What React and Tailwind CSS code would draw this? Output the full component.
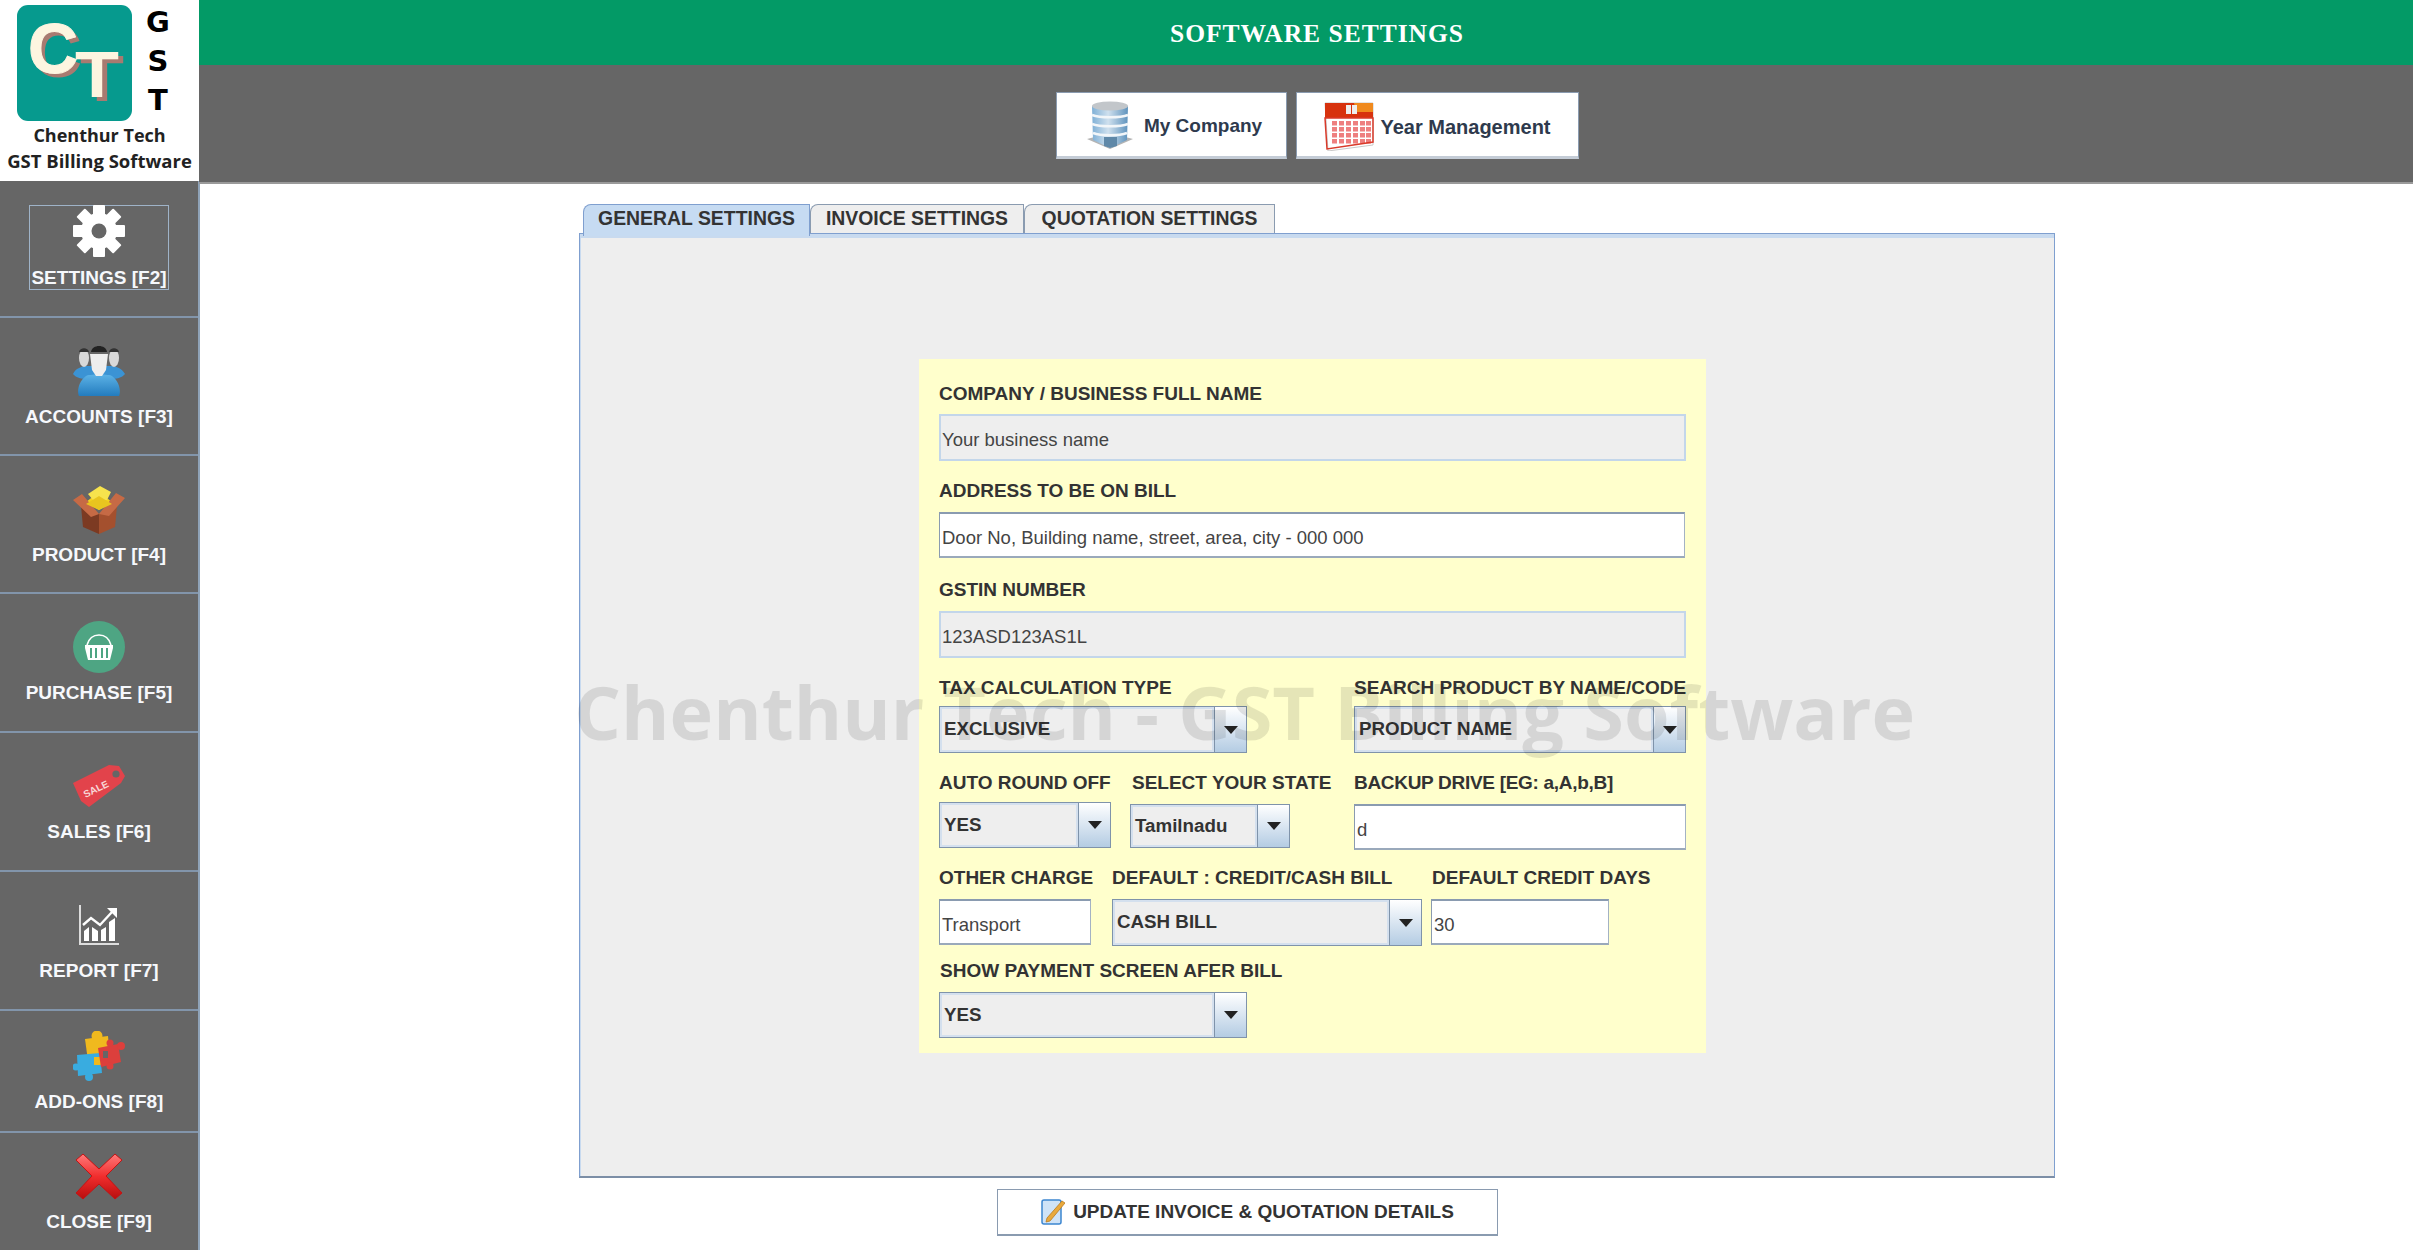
const sans = "font-['Liberation_Sans',Arial,sans-serif]";

/* sidebar icons */
function GearIcon() {
  const teeth = [0, 45, 90, 135, 180, 225, 270, 315];
  return (
    <svg width="52" height="52" viewBox="0 0 52 52">
      {teeth.map((a) => (
        <rect key={a} x="20" y="0" width="12" height="14" rx="1" fill="#fff" transform={`rotate(${a} 26 26)`} />
      ))}
      <circle cx="26" cy="26" r="18" fill="#fff" />
      <circle cx="26" cy="26" r="7.5" fill="#666" />
    </svg>
  );
}

function PeopleIcon() {
  return (
    <svg width="52" height="50" viewBox="0 0 52 50">
      <defs>
        <linearGradient id="shirt" x1="0" y1="0" x2="0" y2="1">
          <stop offset="0" stopColor="#5cb2e6" />
          <stop offset="1" stopColor="#1f78bb" />
        </linearGradient>
      </defs>
      <path d="M0 28c3-6 8-7 12-8h28c5 1 9 3 12 8-3 4-9 5-14 5H14c-5 0-11-1-14-5z" fill="#3b93d4" />
      <ellipse cx="11" cy="12" rx="5" ry="9" fill="#d9d9d9" />
      <ellipse cx="41" cy="12" rx="5" ry="9" fill="#d9d9d9" />
      <path d="M6 6c1-5 9-5 10 0zM36 6c1-5 9-5 10 0z" fill="#333" />
      <path d="M6 50c-2-4-1-14 7-20 2-2 24-2 26 0 8 6 9 16 7 20-5 2-34 2-40 0z" fill="url(#shirt)" />
      <path d="M17 8h18l-2 16-4 6h-6l-4-6z" fill="#eee" />
      <path d="M18 6c1-8 15-8 16 0z" fill="#222" />
    </svg>
  );
}

function BoxIcon() {
  return (
    <svg width="52" height="50" viewBox="0 0 52 50">
      <path d="M13 18 26 8l13 10-13 8z" fill="#f3d21f" />
      <path d="M15 10l12-8 11 6-4 8H20z" fill="#f7e34d" />
      <path d="M8 22l18 8v20L10 43z" fill="#7c3a22" />
      <path d="M44 22l-18 8v20l16-7z" fill="#a4502e" />
      <path d="M0 16l9-6 17 20-8 3zM52 14l-9-5-17 21 10 2z" fill="#c66a45" />
      <path d="M13 20l13 6 13-6-13-8z" fill="#e9c51f" />
    </svg>
  );
}

function BasketIcon() {
  return (
    <svg width="52" height="52" viewBox="0 0 52 52">
      <circle cx="26" cy="26" r="26" fill="#4ea583" />
      <path d="M14 24c2-7 7-10 12-10s10 3 12 10" fill="none" stroke="#fff" strokeWidth="1.6" />
      <path d="M12 24h28v3l-3 12H15l-3-12z" fill="#fff" />
      <path d="M18 27v10M23 27v10M29 27v10M34 27v10" stroke="#4ea583" strokeWidth="2" />
    </svg>
  );
}

function TagIcon() {
  return (
    <svg width="52" height="44" viewBox="0 0 52 44">
      <path d="M0 19 36 1l10 1 6 10-4 7-32 24-8-6z" fill="#e2434b" />
      <circle cx="43" cy="10" r="3.6" fill="#666" />
      <text x="10" y="29" fontSize="10" fontWeight="700" fill="#f8d5d5" transform="rotate(-26 22 26)" fontFamily="Liberation Sans">SALE</text>
    </svg>
  );
}

function ChartIcon() {
  return (
    <svg width="42" height="42" viewBox="0 0 42 42">
      <path d="M2 1v39h39" fill="none" stroke="#ddd" strokeWidth="2" />
      <path d="M6 37V27l5-4v14zM14 37V23l6 4v10zM23 37V26l5-3v14zM31 37V18l6-4v23z" fill="#fff" />
      <path d="M5 21 13 14l9 7 12-13" fill="none" stroke="#fff" strokeWidth="2.4" />
      <path d="M29 4h10v10z" fill="#fff" />
    </svg>
  );
}

function PuzzleIcon() {
  return (
    <svg width="52" height="50" viewBox="0 0 52 50">
      <g fill="#f0b91e">
        <path d="M12 8 35 5l2 22-22 3z" />
        <circle cx="24" cy="5" r="5.5" />
      </g>
      <g fill="#39ace0">
        <path d="M4 24 27 22l2 20-24 3z" />
        <circle cx="16" cy="46" r="4" />
        <circle cx="3" cy="36" r="3.5" />
      </g>
      <rect x="21" y="26" width="9" height="8" fill="#f0b91e" />
      <g fill="#dc3f3c">
        <path d="M25 17 45 13l3 18-20 5z" />
        <circle cx="37" cy="12" r="3.5" />
        <circle cx="48" cy="15" r="4" />
        <circle cx="37" cy="35" r="3.5" />
      </g>
      <rect x="30" y="20" width="5" height="7" fill="#666" />
    </svg>
  );
}

function CloseIcon() {
  return (
    <svg width="50" height="50" viewBox="0 0 50 50">
      <defs>
        <linearGradient id="xred" x1="0" y1="0" x2="0" y2="1">
          <stop offset="0" stopColor="#ff7a7a" />
          <stop offset="0.5" stopColor="#f12d2d" />
          <stop offset="1" stopColor="#b80e0e" />
        </linearGradient>
      </defs>
      <path d="M9 3 25 18 41 3l7 6-16 16 16 17-7 6-16-15L9 48l-7-6 16-17L2 9z" fill="url(#xred)" stroke="#c31313" strokeWidth="1" strokeLinejoin="round" />
    </svg>
  );
}

/* header & misc icons */
function BuildingIcon() {
  return (
    <svg width="46" height="48" viewBox="0 0 46 48">
      <defs>
        <linearGradient id="glass" x1="0" y1="0" x2="1" y2="0">
          <stop offset="0" stopColor="#7fb0d6" />
          <stop offset="0.45" stopColor="#cfe0ee" />
          <stop offset="1" stopColor="#5f93bd" />
        </linearGradient>
      </defs>
      <path d="M0 38l23 10 23-10-23-6z" fill="#b4b4b4" />
      <path d="M5 5h36l-1 34-17 8-17-8z" fill="url(#glass)" />
      <ellipse cx="23" cy="5" rx="18" ry="4.5" fill="#c2c6ca" />
      <path d="M5 14c8 3 28 3 36 0M5 23c8 3 28 3 36 0M6 32c8 3 26 3 34 0" fill="none" stroke="#f2f6f9" strokeWidth="2.5" />
      <path d="M17 36h13v9l-7 2-6-2z" fill="#5f88a8" />
    </svg>
  );
}

function CalendarIcon() {
  return (
    <svg width="50" height="52" viewBox="0 0 50 52">
      <path d="M1 4h48v42L4 52z" fill="#fff" stroke="#c9c9c9" />
      <path d="M1 4h48v15H1z" fill="#d7320e" />
      <path d="M30 4h19v9H32z" fill="#f08a1e" />
      <rect x="22" y="6" width="5" height="9" fill="#eee" />
      <rect x="28" y="6" width="5" height="9" fill="#eee" />
      <g fill="#ee7f7f">
        {[22, 28, 34, 40].map((y) =>
          [8, 15, 22, 29, 36, 42].map((x) => <rect key={`${x}-${y}`} x={x} y={y} width="5" height="4.5" />)
        )}
      </g>
      <path d="M1 19h48v24L3 50z" fill="none" stroke="#d93a2a" strokeWidth="1.5" />
    </svg>
  );
}

function EditIcon() {
  return (
    <svg width="24" height="26" viewBox="0 0 24 26">
      <rect x="1" y="1" width="19" height="24" rx="2" fill="#cfe3f7" stroke="#3d86d0" strokeWidth="1.5" />
      <path d="M21 2l3 2L9 22l-4 1 1-4z" fill="#e9a93c" stroke="#b97b1e" strokeWidth="0.8" />
    </svg>
  );
}

function SideItem({ icon, label, h, focused }) {
  return (
    <div className={`${h} flex flex-col items-center justify-center border-b-2 border-[#8295ab] last:border-b-0`}>
      <div className={`flex flex-col items-center ${focused ? "w-[140px] h-[85px] border border-[#9fb3c8] -mt-[3px]" : "gap-[11px]"}`}>
        <div className="h-[50px] flex items-center justify-center">{icon}</div>
        <span className={`h-5 text-[19px] leading-5 font-bold text-[#f6f8fc] whitespace-nowrap ${sans} ${focused ? "mt-[12px]" : ""}`}>{label}</span>
      </div>
    </div>
  );
}

function Label({ children, className = "" }) {
  return <div className={`h-5 text-[19px] leading-5 font-bold text-[#333] whitespace-nowrap ${className}`}>{children}</div>;
}

function TextBox({ value, className = "" }) {
  return (
    <div className={`bg-white border-t-2 border-l border-r border-t-[#8a9bb0] border-l-[#8a9bb0] border-r-[#a3b2c4] border-b-2 border-b-[#9aa9bb] px-[2px] pt-[6px] flex items-center text-[18.5px] text-[#444] ${className}`}>
      {value}
    </div>
  );
}

function ReadOnlyBox({ value, className = "" }) {
  return (
    <div className={`bg-[#eeeeee] border-2 border-[#c3d6ea] pl-[1px] pt-[4px] flex items-center text-[18.5px] text-[#444] ${className}`}>
      {value}
    </div>
  );
}

function Combo({ value, className = "", arrow = "w-[32px]" }) {
  return (
    <div className={`flex border border-[#7f93aa] bg-[#eeeeee] ${className}`}>
      <div className="flex-1 border-2 border-[#d4e0ee] pl-[2px] flex items-center text-[18.75px] font-bold text-[#333] whitespace-nowrap overflow-hidden">
        {value}
      </div>
      <div className={`${arrow} border-l border-[#7f93aa] bg-gradient-to-b from-white to-[#b4cce3] flex items-center justify-center`}>
        <div className="w-0 h-0 border-l-[7px] border-r-[7px] border-t-[8px] border-l-transparent border-r-transparent border-t-[#222]" />
      </div>
    </div>
  );
}

function Tab({ label, active, className = "" }) {
  return (
    <div
      className={`rounded-tl-[8px] border-t border-r border-l flex items-center justify-center text-[19.4px] font-bold text-[#333] whitespace-nowrap ${
        active ? "h-[32px] pb-[3px] bg-[#c6dbf2] border-[#7f9fcf] relative z-10" : "h-[29px] bg-[#eeeeee] border-[#8a9bb0]"
      } ${className}`}
    >
      {label}
    </div>
  );
}

function TopButton({ icon, label, className = "" }) {
  return (
    <div className={`h-[67px] bg-white border border-[#8a9bb0] border-b-[3px] border-b-[#c4ccd6] flex items-center justify-center font-bold text-[#2e3a4d] ${className}`}>
      {icon}
      <span className="pt-[4px]">{label}</span>
    </div>
  );
}

export default function App() {
  return (
    <div className={`relative flex w-full h-screen overflow-hidden bg-white ${sans}`}>
      {/* left menu */}
      <aside className="w-[199px] shrink-0 flex flex-col">
        <div className="h-[180px] bg-white mb-[1px]">
          <div className="flex h-[122px]">
            <svg className="ml-[17px] mt-[5px]" width="115" height="116" viewBox="0 0 115 116">
              <rect width="115" height="116" rx="11" fill="#069a8e" />
              <g fontFamily="Liberation Sans" fontWeight="700">
                <text x="15" y="72" fontSize="70" fill="#a87a70" textLength="50" lengthAdjust="spacingAndGlyphs">C</text>
                <text x="11" y="68" fontSize="70" fill="#fdf5e0" stroke="#fdf5e0" textLength="50" lengthAdjust="spacingAndGlyphs">C</text>
                <text x="63" y="96" fontSize="65" fill="#a87a70" textLength="44" lengthAdjust="spacingAndGlyphs">T</text>
                <text x="58" y="92" fontSize="65" fill="#fdf5e0" textLength="44" lengthAdjust="spacingAndGlyphs">T</text>
              </g>
            </svg>
            <div className="ml-[12px] mt-[7px] w-[28px] flex flex-col items-center gap-[9px] text-[29px] leading-[30px] font-bold text-black font-['DejaVu_Sans',sans-serif]">
              <span>G</span>
              <span>S</span>
              <span>T</span>
            </div>
          </div>
          <div className="flex flex-col items-center text-[#222] font-bold font-['Open_Sans',sans-serif] whitespace-nowrap">
            <span className="text-[18px] leading-[26px]">Chenthur Tech</span>
            <span className="text-[18.5px] leading-[26px]">GST Billing Software</span>
          </div>
        </div>
        <nav className="flex-1 -mr-[1px] bg-[#666666] border-r-2 border-[#8fa3b8] flex flex-col">
          <SideItem h="h-[137px]" icon={<GearIcon />} label="SETTINGS [F2]" focused />
          <SideItem h="h-[138px]" icon={<PeopleIcon />} label="ACCOUNTS [F3]" />
          <SideItem h="h-[138px]" icon={<BoxIcon />} label="PRODUCT [F4]" />
          <SideItem h="h-[139px]" icon={<BasketIcon />} label="PURCHASE [F5]" />
          <SideItem h="h-[139px]" icon={<TagIcon />} label="SALES [F6]" />
          <SideItem h="h-[139px]" icon={<ChartIcon />} label="REPORT [F7]" />
          <SideItem h="h-[122px]" icon={<PuzzleIcon />} label="ADD-ONS [F8]" />
          <SideItem h="flex-1" icon={<CloseIcon />} label="CLOSE [F9]" />
        </nav>
      </aside>

      <div className="flex-1 flex flex-col min-w-0">
        <header className="h-[65px] bg-[#039a66] flex items-center justify-center pl-[22px] pt-[4px] text-white text-[25.5px] font-bold tracking-[1px] font-['Liberation_Serif',serif]">
          SOFTWARE SETTINGS
        </header>
        <div className="h-[119px] bg-[#666666] border-b-2 border-[#9a9a9a] pt-[27px] pl-[857px] flex gap-[9px]">
          <TopButton className="w-[231px] gap-[11px] pl-[6px] text-[19px]" icon={<BuildingIcon />} label="My Company" />
          <TopButton className="w-[283px] gap-[6px] text-[20px]" icon={<CalendarIcon />} label="Year Management" />
        </div>

        <main className="flex-1 pt-[20px]">
          <div className="ml-[384px] flex items-start h-[32px] -mb-[3px]">
            <Tab active label="GENERAL SETTINGS" className="w-[227px]" />
            <Tab label="INVOICE SETTINGS" className="w-[214px]" />
            <Tab label="QUOTATION SETTINGS" className="w-[251px]" />
          </div>
          <div className="ml-[380px] w-[1476px] h-[945px] bg-[#eeeeee] border border-[#7f9fcf] border-b-2 border-b-[#7c8ea6] shadow-[inset_1px_4px_0_#c8daef] pl-[339px] pt-[125px]">
            {/* form panel */}
            <div className="w-[787px] h-[694px] bg-[#ffffcc] pl-[20px] pt-[25px]">
              <Label>COMPANY / BUSINESS FULL NAME</Label>
              <ReadOnlyBox value="Your business name" className="mt-[10px] w-[747px] h-[47px]" />
              <Label className="mt-[20px]">ADDRESS TO BE ON BILL</Label>
              <TextBox value="Door No, Building name, street, area, city - 000 000" className="mt-[11px] w-[746px] h-[46px]" />
              <Label className="mt-[22px]">GSTIN NUMBER</Label>
              <ReadOnlyBox value="123ASD123AS1L" className="mt-[11px] w-[747px] h-[47px]" />

              <div className="mt-[20px] flex gap-[107px]">
                <div className="w-[308px]">
                  <Label>TAX CALCULATION TYPE</Label>
                  <Combo value="EXCLUSIVE" className="mt-[8px] h-[47px]" />
                </div>
                <div className="w-[332px]">
                  <Label>SEARCH PRODUCT BY NAME/CODE</Label>
                  <Combo value="PRODUCT NAME" className="mt-[8px] h-[47px]" />
                </div>
              </div>

              <div className="mt-[20px] flex">
                <div className="w-[172px]">
                  <Label>AUTO ROUND OFF</Label>
                  <Combo value="YES" className="mt-[9px] h-[46px]" />
                </div>
                <div className="w-[160px] ml-[19px]">
                  <Label className="ml-[2px]">SELECT YOUR STATE</Label>
                  <Combo value="Tamilnadu" className="mt-[11px] h-[44px]" />
                </div>
                <div className="w-[332px] ml-[64px]">
                  <Label className="tracking-[-0.3px]">BACKUP DRIVE [EG: a,A,b,B]</Label>
                  <TextBox value="d" className="mt-[11px] h-[46px]" />
                </div>
              </div>

              <div className="mt-[18px] flex">
                <div className="w-[152px]">
                  <Label>OTHER CHARGE</Label>
                  <TextBox value="Transport" className="mt-[11px] h-[46px]" />
                </div>
                <div className="w-[310px] ml-[21px]">
                  <Label>DEFAULT : CREDIT/CASH BILL</Label>
                  <Combo value="CASH BILL" className="mt-[11px] h-[47px]" />
                </div>
                <div className="w-[178px] ml-[9px]">
                  <Label className="ml-[1px]">DEFAULT CREDIT DAYS</Label>
                  <TextBox value="30" className="mt-[11px] h-[46px]" />
                </div>
              </div>

              <Label className="mt-[15px] ml-[1px]">SHOW PAYMENT SCREEN AFER BILL</Label>
              <Combo value="YES" className="mt-[11px] w-[308px] h-[46px]" />
            </div>
          </div>
          <div className="mt-[11px] ml-[798px] w-[501px] h-[47px] bg-white border border-[#8a9bb0] border-b-2 flex items-center justify-center gap-[8px] text-[19px] font-bold text-[#333]">
            <EditIcon />
            <span>UPDATE INVOICE &amp; QUOTATION DETAILS</span>
          </div>
        </main>
      </div>

      {/* watermark sits over the form */}
      <div className="absolute left-[574px] top-[660px] pointer-events-none text-[73.8px] leading-[104px] font-bold text-black/10 whitespace-nowrap font-['Open_Sans',sans-serif]">
        Chenthur Tech - GST Billing Software
      </div>
    </div>
  );
}
